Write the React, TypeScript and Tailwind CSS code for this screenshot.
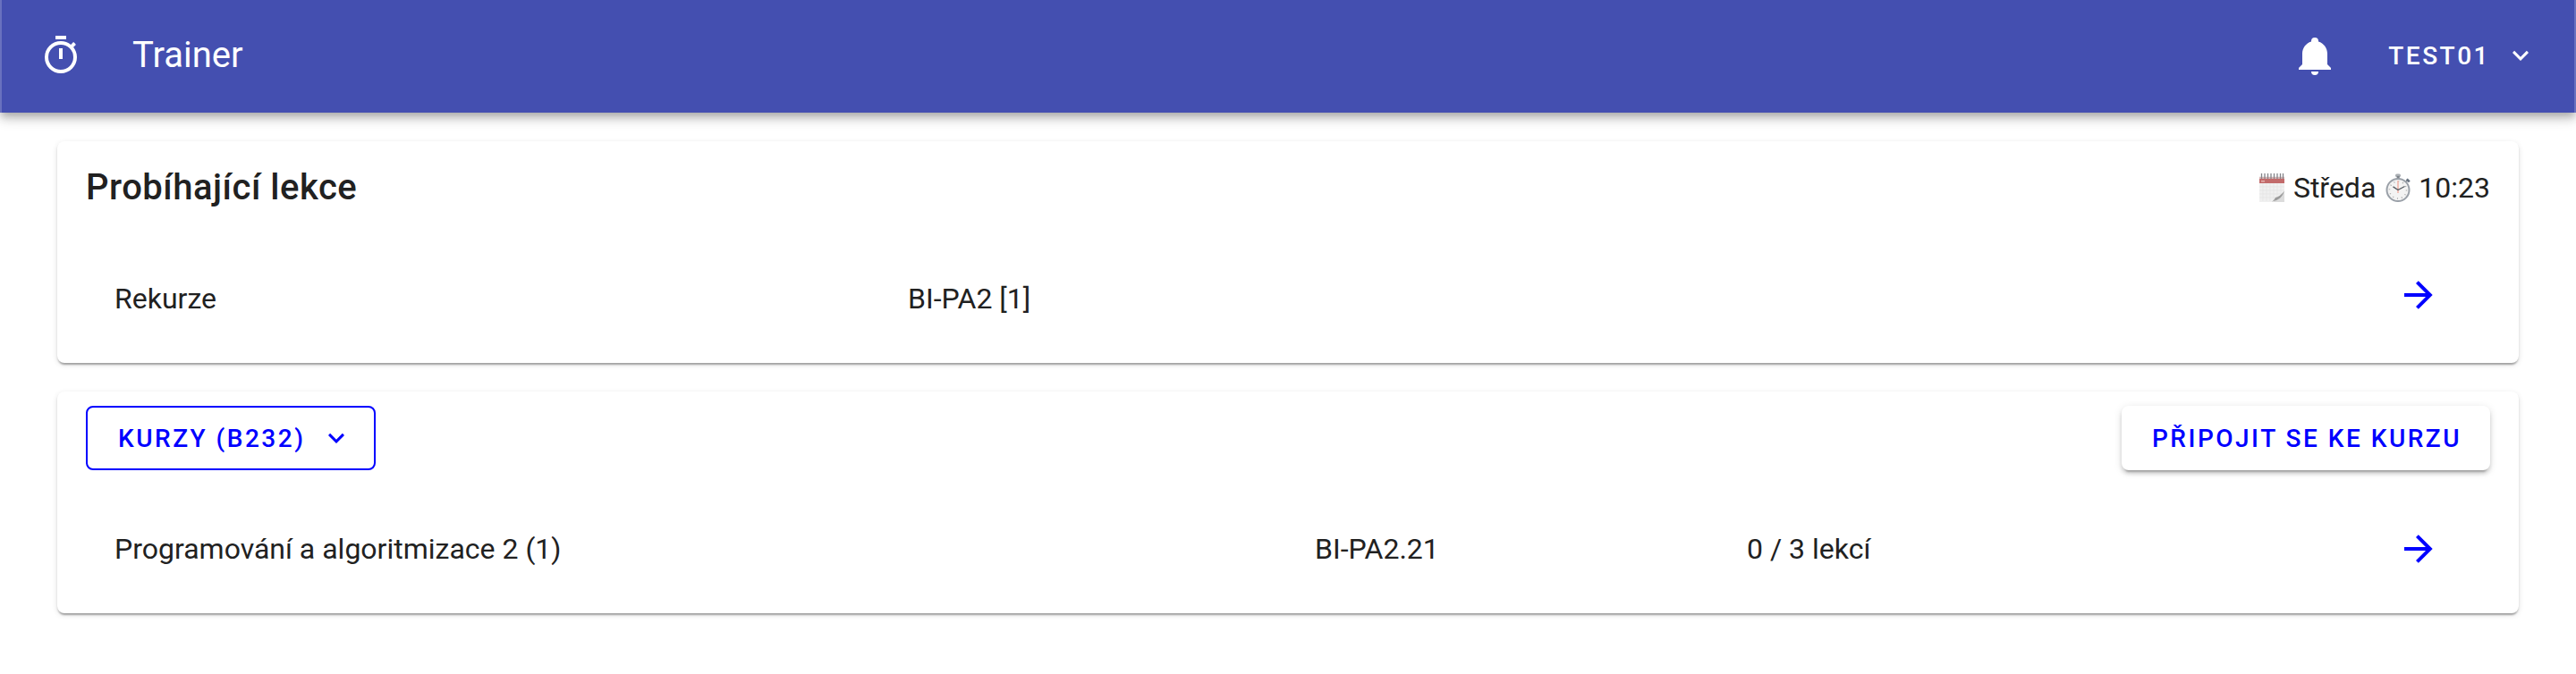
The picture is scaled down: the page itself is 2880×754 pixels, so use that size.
import React from "react";

const paths = {
  timer:
    "M12,20A7,7 0 0,1 5,13A7,7 0 0,1 12,6A7,7 0 0,1 19,13A7,7 0 0,1 12,20M19.03,7.39L20.45,5.97C20,5.46 19.55,5 19.04,4.56L17.62,6C16.07,4.74 14.12,4 12,4A9,9 0 0,0 3,13A9,9 0 0,0 12,22C17,22 21,17.97 21,13C21,10.88 20.26,8.93 19.03,7.39M11,14H13V8H11M15,1H9V3H15V1Z",
  bell:
    "M21,19V20H3V19L5,17V11C5,7.9 7.03,5.17 10,4.29C10,4.19 10,4.1 10,4A2,2 0 0,1 12,2A2,2 0 0,1 14,4C14,4.1 14,4.19 14,4.29C16.97,5.17 19,7.9 19,11V17L21,19M14,21A2,2 0 0,1 12,23A2,2 0 0,1 10,21",
  chevron: "M7.41,8.58L12,13.17L16.59,8.58L18,10L12,16L6,10L7.41,8.58Z",
  arrow: "M4,11V13H16L10.5,18.5L11.92,19.92L19.84,12L11.92,4.08L10.5,5.5L16,11H4Z",
};

function Icon({ name, className }: { name: keyof typeof paths; className: string }) {
  return (
    <svg viewBox="0 0 24 24" fill="currentColor" className={`shrink-0 ${className}`}>
      <path d={paths[name]} />
    </svg>
  );
}

function CalendarIcon() {
  return (
    <svg viewBox="0 0 28 32" className="h-8 w-7 shrink-0">
      <path d="M0 3H28V32H0Z" fill="#f0f0f0" />
      <path d="M4 11V31M8 11V31M12 11V31M16 11V31M20 11V31M24 11V24M0 15H28M0 19H28M0 23H26M0 27H20" stroke="#e2e2e2" strokeWidth="0.6" />
      <path d="M0 4.5H28V11H0Z" fill="#c26b6b" />
      <path d="M0 4.5H28V6H0Z" fill="#d9b9b9" />
      <path d="M2 8.7H6" stroke="#e6b0ae" strokeWidth="1.5" />
      <path d="M2.5 0V6M6 0V6M9.5 0V6M13 0V6M16.5 0V6M20 0V6M23.5 0V6M26.5 0V6" stroke="#85858a" strokeWidth="1.3" />
      <path d="M14 32C20 30 25 27 28 20V32Z" fill="#dcdcdc" />
      <path d="M14 31.5C17 30 17 28 18 27C20 27 25 24 28 19.5C26 26 22 30 14 31.5Z" fill="#9b9b9b" />
    </svg>
  );
}

function StopwatchIcon() {
  return (
    <svg viewBox="0 0 28 32" className="h-8 w-7 shrink-0">
      <rect x="11" y="0.5" width="6" height="3.8" rx="1.8" fill="#a9aeb3" />
      <rect x="12.7" y="3" width="3" height="3" fill="#7d838a" />
      <path d="M22 10L25 7.5" stroke="#8d939a" strokeWidth="2" />
      <path d="M23.8 6.4L26.8 9.4" stroke="#66717f" strokeWidth="2.6" />
      <circle cx="14" cy="18.5" r="12.5" fill="#f3f3f3" stroke="#9aa0a8" strokeWidth="2" />
      <circle cx="14" cy="18.5" r="9.5" fill="none" stroke="#a9a9a9" strokeWidth="1.5" strokeDasharray="1 3.97" />
      <path d="M14 8V22" stroke="#f0b5aa" strokeWidth="1.6" />
      <path d="M8.5 14.8L14 18.5L21.5 14.5" fill="none" stroke="#555a60" strokeWidth="1.4" />
    </svg>
  );
}

const card =
  "flex h-[248px] flex-col rounded-lg bg-white px-8 shadow-[0_4px_2px_-2px_rgba(0,0,0,0.2),0_2px_2px_0_rgba(0,0,0,0.14),0_2px_6px_0_rgba(0,0,0,0.12)]";
const buttonText = "text-[28px] leading-[42px] font-medium tracking-[2.5px] uppercase";

export default function App() {
  return (
    <div className="min-h-[754px] w-full bg-white text-[32px] text-[#212121] [font-family:Roboto,sans-serif]">
      <header className="flex h-[126px] items-center border-x-2 border-[#6971bf] bg-[#444fb0] bg-clip-padding pb-0.5 pl-[42px] pr-[42px] text-white shadow-[0_4px_8px_-2px_rgba(0,0,0,0.2),0_8px_10px_0_rgba(0,0,0,0.14),0_2px_20px_0_rgba(0,0,0,0.12)]">
        <Icon name="timer" className="size-12" />
        <h1 className="ml-14 text-[40px] leading-[60px]">Trainer</h1>
        <div className="ml-auto flex items-center">
          <Icon name="bell" className="size-12" />
          <button className={`ml-[58px] flex items-center ${buttonText}`}>
            <span className="pt-0.5">Test01</span>
            <Icon name="chevron" className="ml-4 size-9" />
          </button>
        </div>
      </header>

      <main className="flex flex-col gap-8 px-16 pt-8">
        <section className={card}>
          <div className="flex h-[104px] items-center justify-between">
            <h2 className="text-[40px] font-medium tracking-[0.5px]">Probíhající lekce</h2>
            <div className="flex items-center">
              <CalendarIcon />
              <span className="ml-2.5">Středa</span>
              <span className="ml-[11px]"><StopwatchIcon /></span>
              <span className="ml-[9px]">10:23</span>
            </div>
          </div>
          <div className="grid h-[144px] grid-cols-[887px_1fr_48px] items-center pl-8 pr-14">
            <span>Rekurze</span>
            <span>BI-PA2 [1]</span>
            <a href="#" className="text-[#0000ff]"><Icon name="arrow" className="mb-2 size-12" /></a>
          </div>
        </section>

        <section className={card}>
          <div className="flex h-[104px] items-center justify-between">
            <button className={`flex h-[72px] w-[324px] items-center rounded-lg border-2 border-[#0000ff] pl-[34px] text-[#0000ff] ${buttonText}`}>
              <span className="pt-0.5">Kurzy (B232)</span>
              <Icon name="chevron" className="ml-[17px] size-9" />
            </button>
            <button className={`h-[72px] w-[412px] rounded-lg bg-white pt-0.5 pl-0.5 text-[#0000ff] shadow-[0_6px_2px_-4px_rgba(0,0,0,0.2),0_4px_4px_0_rgba(0,0,0,0.14),0_2px_10px_0_rgba(0,0,0,0.12)] ${buttonText}`}>
              Připojit se ke kurzu
            </button>
          </div>
          <div className="grid h-[144px] grid-cols-[1342px_483px_1fr_48px] items-center pl-8 pr-14">
            <span>Programování a algoritmizace 2 (1)</span>
            <span>BI-PA2.21</span>
            <span>0 / 3 lekcí</span>
            <a href="#" className="text-[#0000ff]"><Icon name="arrow" className="size-12" /></a>
          </div>
        </section>
      </main>
    </div>
  );
}
